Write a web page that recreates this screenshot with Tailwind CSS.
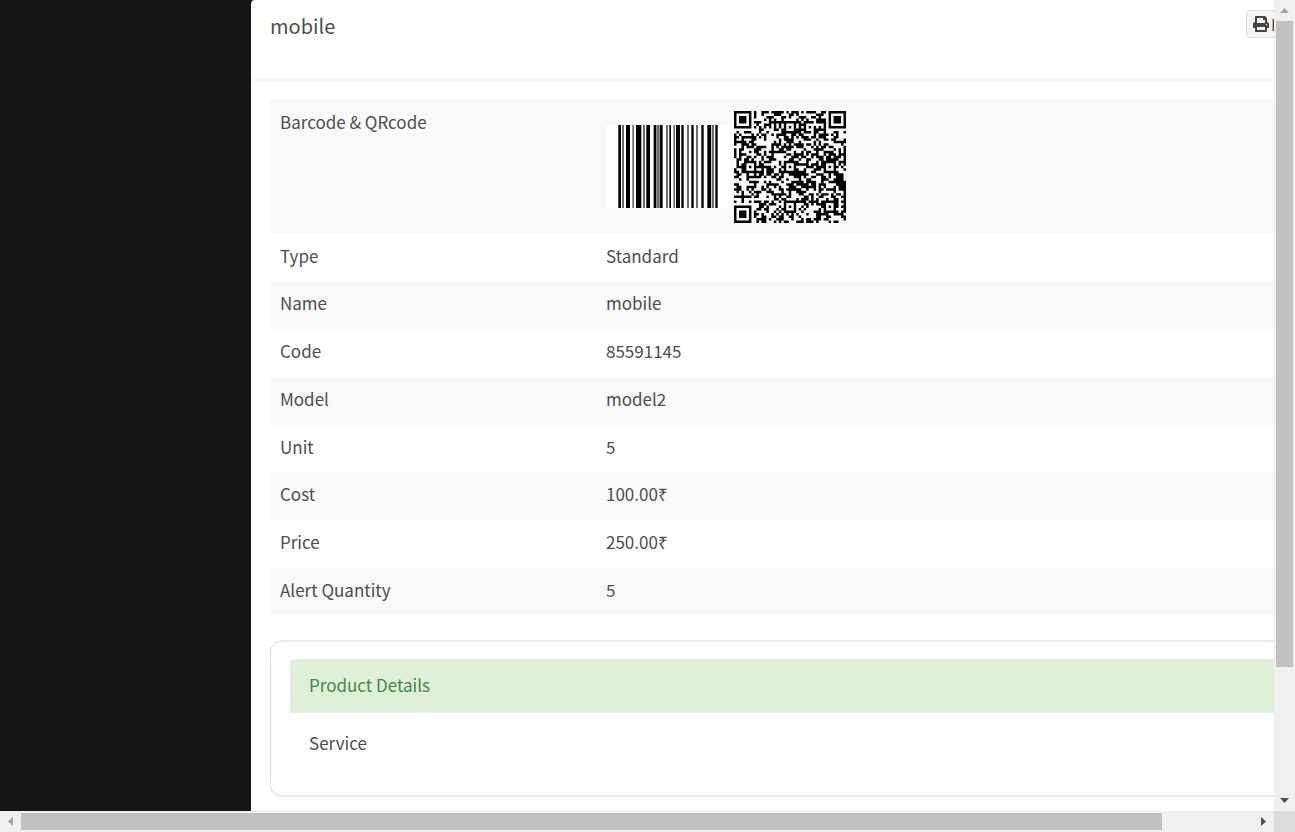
<!DOCTYPE html>
<html lang="en">
<head>
<meta charset="utf-8">
<title>mobile</title>
<script src="https://cdn.jsdelivr.net/npm/@tailwindcss/browser@4"></script>
</head>
<body class="grid h-screen grid-cols-[minmax(0,1fr)_21px] grid-rows-[minmax(0,1fr)_21px] overflow-hidden bg-[#f0f0f0] font-['Noto_Sans_CJK_SC',sans-serif] text-[17px] leading-7 text-[#4d4d4d]">
<div class="flex overflow-hidden bg-[#141517]">
  <aside class="w-[251px] shrink-0"></aside>
  <main class="w-[calc(100%-149px)] shrink-0 rounded-tl bg-white">
    <header class="flex h-[81px] items-start justify-between border-b-2 border-[#f8f8f8] pt-[10px] pl-[19px]">
      <h1 class="text-xl leading-8">mobile</h1>
      <div class="w-[130px]">
        <button type="button" class="flex h-7 items-center gap-0.5 rounded border border-[#dddddd] bg-[#f4f4f4] px-1.5 text-base leading-6 text-[#444444]">
          <svg class="size-4" viewBox="0 0 512 512" fill="currentColor" aria-hidden="true"><path d="M448 192V77.250c0-8.490-3.370-16.620-9.370-22.630L393.370 9.370C387.370 3.370 379.230 0 370.750 0H96C78.330 0 64 14.330 64 32v160c-35.350 0-64 28.650-64 64v112c0 8.840 7.160 16 16 16h48v96c0 17.670 14.330 32 32 32h320c17.670 0 32-14.330 32-32v-96h48c8.840 0 16-7.160 16-16V256c0-35.350-28.650-64-64-64zm-64 256H128v-96h256v96zm0-224H128V64h192v48c0 8.840 7.160 16 16 16h48v96zm48 72c-13.250 0-24-10.750-24-24s10.750-24 24-24 24 10.750 24 24-10.750 24-24 24z"/></svg>
          Print
        </button>
      </div>
    </header>
    <div class="px-[19px] pt-[18px]">
      <table class="w-full table-fixed border-collapse text-left">
        <colgroup><col class="w-[326px]"><col></colgroup>
        <tbody>
          <tr class="h-[135px] bg-[#f9f9f9]">
            <th scope="row" class="px-2.5 pt-[9px] align-top font-normal">Barcode &amp; QRcode</th>
            <td class="px-2.5">
              <div class="flex items-center gap-1">
                <svg class="h-[83px] w-[124px] bg-white" viewBox="0 0 372 249" role="img" aria-label="Barcode">
                  <path d="M37 0h8v249h-8zM60 0h12v249h-12zM90 0h16v249h-16zM121 0h11v249h-11zM143 0h8v249h-8zM162 0h8v249h-8zM190 0h5v249h-5zM210 0h12v249h-12zM226 0h7v249h-7zM256 0h7v249h-7zM286 0h7v249h-7zM304 0h11v249h-11zM328 0h7v249h-7z"/>
                  <path fill="#686a6d" d="M48 0h6v249h-6zM79 0h5v249h-5zM111 0h6v249h-6zM152 0h9v249h-9zM180 0h6v249h-6zM202 0h5v249h-5zM243 0h6v249h-6zM270 0h6v249h-6zM317 0h7v249h-7z"/>
                </svg>
                <svg class="size-[112px]" viewBox="0 0 45 45" role="img" aria-label="QR code"><rect width="45" height="45" fill="#fff"/><path id="qr"/></svg>
              </div>
            </td>
          </tr>
          <tr class="h-[47px]"><th scope="row" class="px-2.5 pb-1 font-normal">Type</th><td class="px-2.5 pb-1">Standard</td></tr>
          <tr class="h-12 bg-[#f9f9f9]"><th scope="row" class="px-2.5 pb-1 font-normal">Name</th><td class="px-2.5 pb-1">mobile</td></tr>
          <tr class="h-12"><th scope="row" class="px-2.5 pb-1 font-normal">Code</th><td class="px-2.5 pb-1">85591145</td></tr>
          <tr class="h-12 bg-[#f9f9f9]"><th scope="row" class="px-2.5 pb-1 font-normal">Model</th><td class="px-2.5 pb-1">model2</td></tr>
          <tr class="h-[47px]"><th scope="row" class="px-2.5 pb-1 font-normal">Unit</th><td class="px-2.5 pb-1">5</td></tr>
          <tr class="h-12 bg-[#f9f9f9]"><th scope="row" class="px-2.5 pb-1 font-normal">Cost</th><td class="px-2.5 pb-1">100.00₹</td></tr>
          <tr class="h-12"><th scope="row" class="px-2.5 pb-1 font-normal">Price</th><td class="px-2.5 pb-1">250.00₹</td></tr>
          <tr class="h-[47px] bg-[#f9f9f9]"><th scope="row" class="px-2.5 pb-1 font-normal">Alert Quantity</th><td class="px-2.5 pb-1">5</td></tr>
        </tbody>
      </table>
      <section class="mt-[25px] rounded-xl border border-t-2 border-b-2 border-[#d5ebc8] border-t-[#e6f2de] border-b-[#e4efdc] px-[19px] pt-[17px] pb-[18px]">
        <h2 class="rounded-t-sm border-y border-[#e6f4df] bg-[#def0d8] px-[19px] pt-[11px] pb-[13px] leading-7 text-[#478449]">Product Details</h2>
        <p class="px-[19px] pt-4 pb-5">Service</p>
      </section>
    </div>
  </main>
</div>
<div class="flex flex-col items-center" aria-hidden="true">
  <div class="grid h-[21px] shrink-0 place-items-center"><svg class="h-[5px] w-[9px]" viewBox="0 0 9 5"><path fill="#a3a3a3" d="M0 5 4.500 0 9 5z"/></svg></div>
  <div class="w-[17px] grow-[646] bg-[#c1c1c1]"></div>
  <div class="grow-[123]"></div>
  <div class="grid h-[21px] shrink-0 place-items-center"><svg class="h-[5px] w-[9px]" viewBox="0 0 9 5"><path fill="#505050" d="M0 0h9L4.500 5z"/></svg></div>
</div>
<div class="flex items-center" aria-hidden="true">
  <div class="grid w-[21px] shrink-0 place-items-center"><svg class="h-[9px] w-[5px]" viewBox="0 0 5 9"><path fill="#a3a3a3" d="M5 0v9L0 4.500z"/></svg></div>
  <div class="h-[17px] grow-[1141] bg-[#c1c1c1]"></div>
  <div class="grow-[91]"></div>
  <div class="grid w-[21px] shrink-0 place-items-center"><svg class="h-[9px] w-[5px]" viewBox="0 0 5 9"><path fill="#505050" d="M0 0v9l5-4.500z"/></svg></div>
</div>
<div class="bg-[#dcdcdc]"></div>
<script>
  // Version 7 symbol: 45 x 45 modules
  const size = 45;
  let seed = 85591145;
  const next = () => (seed = (Math.imul(seed, 1664525) + 1013904223) >>> 0) / 4294967296;
  const grid = Array.from({ length: size }, () => Array.from({ length: size }, () => next() < 0.52));
  for (let i = 0; i < size; i++) grid[6][i] = grid[i][6] = i % 2 === 0;
  const rings = (cx, cy, reach, light) => {
    for (let y = cy - reach; y <= cy + reach; y++)
      for (let x = cx - reach; x <= cx + reach; x++)
        if (x >= 0 && y >= 0 && x < size && y < size)
          grid[y][x] = !light.includes(Math.max(Math.abs(x - cx), Math.abs(y - cy)));
  };
  [[3, 3], [41, 3], [3, 41]].forEach(([x, y]) => rings(x, y, 4, [2, 4]));
  [[22, 6], [6, 22], [22, 22], [38, 22], [22, 38], [38, 38]].forEach(([x, y]) => rings(x, y, 2, [1]));
  let d = "";
  grid.forEach((row, y) => row.forEach((on, x) => { if (on) d += `M${x} ${y}h1v1h-1z`; }));
  document.getElementById("qr").setAttribute("d", d);
</script>
</body>
</html>
